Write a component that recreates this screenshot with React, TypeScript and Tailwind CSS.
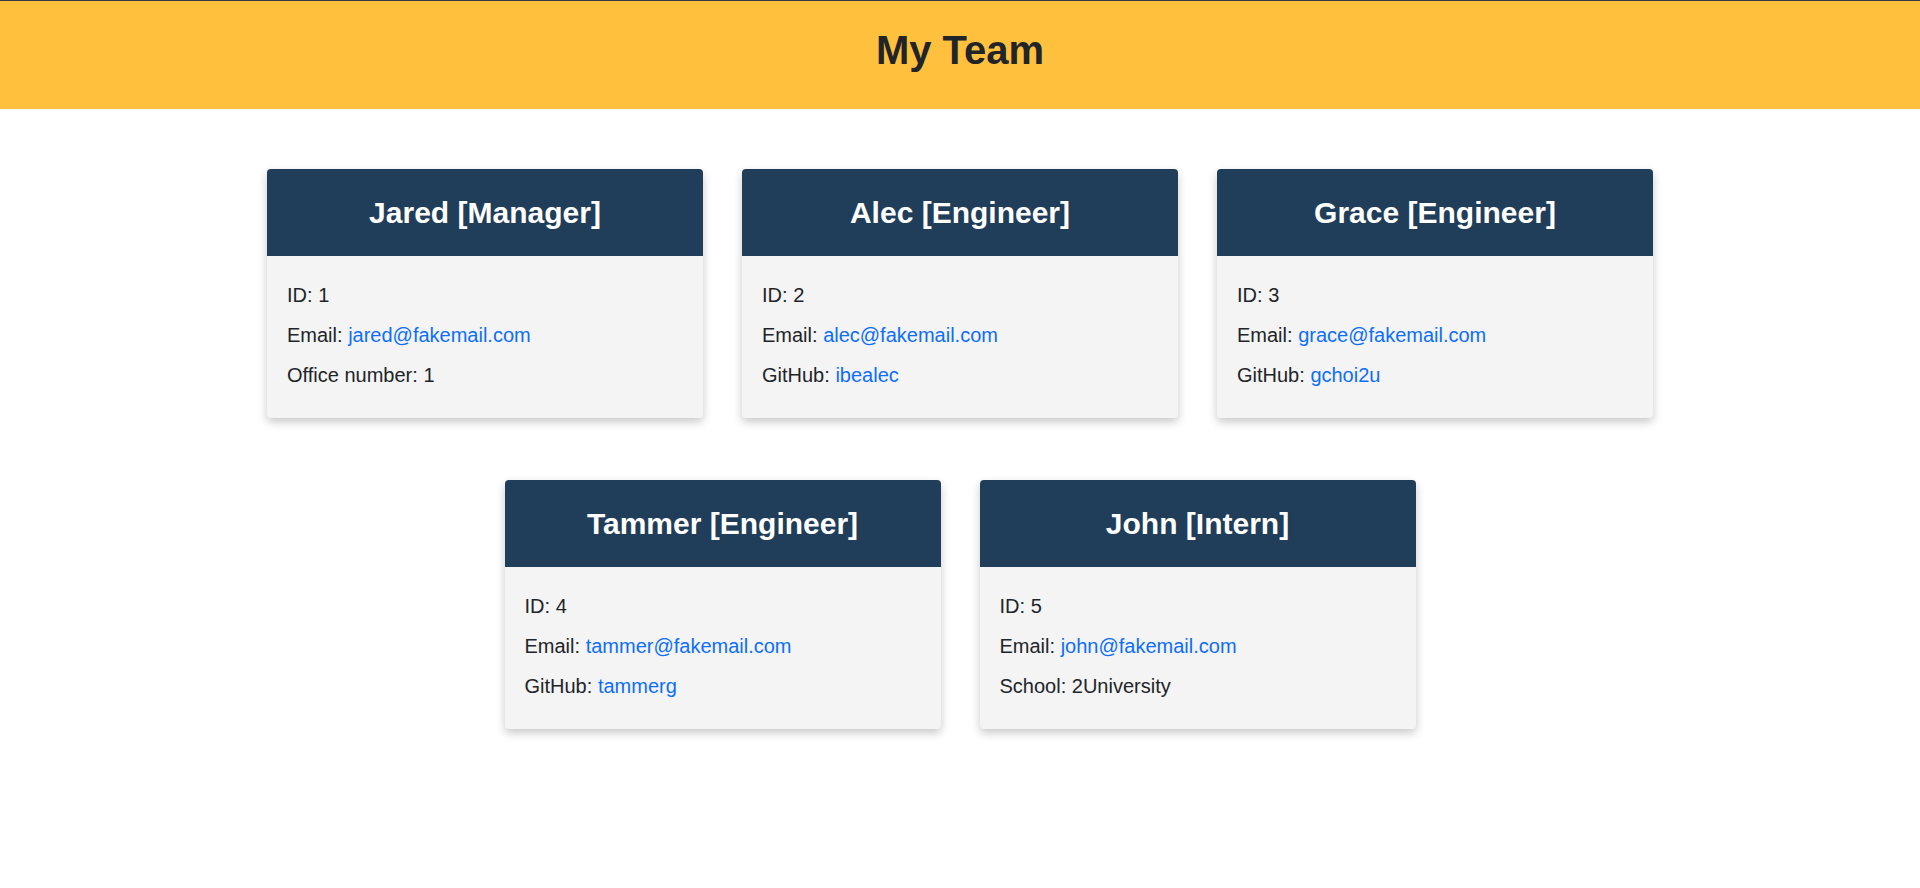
import React from "react";

interface Member {
  name: string;
  role: string;
  id: number;
  email: string;
  extraLabel: string;
  extraValue: string;
  extraLink?: boolean;
}

const team: Member[] = [
  { name: "Jared", role: "Manager", id: 1, email: "jared@fakemail.com", extraLabel: "Office number", extraValue: "1" },
  { name: "Alec", role: "Engineer", id: 2, email: "alec@fakemail.com", extraLabel: "GitHub", extraValue: "ibealec", extraLink: true },
  { name: "Grace", role: "Engineer", id: 3, email: "grace@fakemail.com", extraLabel: "GitHub", extraValue: "gchoi2u", extraLink: true },
  { name: "Tammer", role: "Engineer", id: 4, email: "tammer@fakemail.com", extraLabel: "GitHub", extraValue: "tammerg", extraLink: true },
  { name: "John", role: "Intern", id: 5, email: "john@fakemail.com", extraLabel: "School", extraValue: "2University" },
];

function Card({ m }: { m: Member }) {
  return (
    <div className="w-[436px] rounded-[4px] overflow-hidden bg-[#f4f4f4] shadow-[0_4px_10px_rgba(0,0,0,0.22)]">
      <div className="h-[87px] bg-[#203d5a] flex items-center justify-center">
        <h2 className="text-[30px] font-bold text-white leading-none">
          {m.name} [{m.role}]
        </h2>
      </div>
      <div className="pt-6 pb-[28px] px-5 flex flex-col gap-[10px] text-[20px] leading-[30px] text-[#212529]">
        <p>ID: {m.id}</p>
        <p>
          Email: <a href={`mailto:${m.email}`} className="text-[#0d6efd]">{m.email}</a>
        </p>
        <p>
          {m.extraLabel}:{" "}
          {m.extraLink ? (
            <a href="#" className="text-[#0d6efd]">{m.extraValue}</a>
          ) : (
            m.extraValue
          )}
        </p>
      </div>
    </div>
  );
}

export default function App() {
  return (
    <div className="min-h-screen bg-white" style={{ fontFamily: '"Liberation Sans", Arial, sans-serif' }}>
      <header className="h-[109px] bg-[#ffc03d] border-t border-[#343a40] flex items-center justify-center pb-[10px]">
        <h1 className="text-[40px] font-bold text-[#212529] leading-none">My Team</h1>
      </header>

      <main className="w-[1420px] mx-auto pt-[60px] flex flex-wrap justify-center gap-x-[39px] gap-y-[62px]">
        {team.map((m) => (
          <Card key={m.id} m={m} />
        ))}
      </main>
    </div>
  );
}
